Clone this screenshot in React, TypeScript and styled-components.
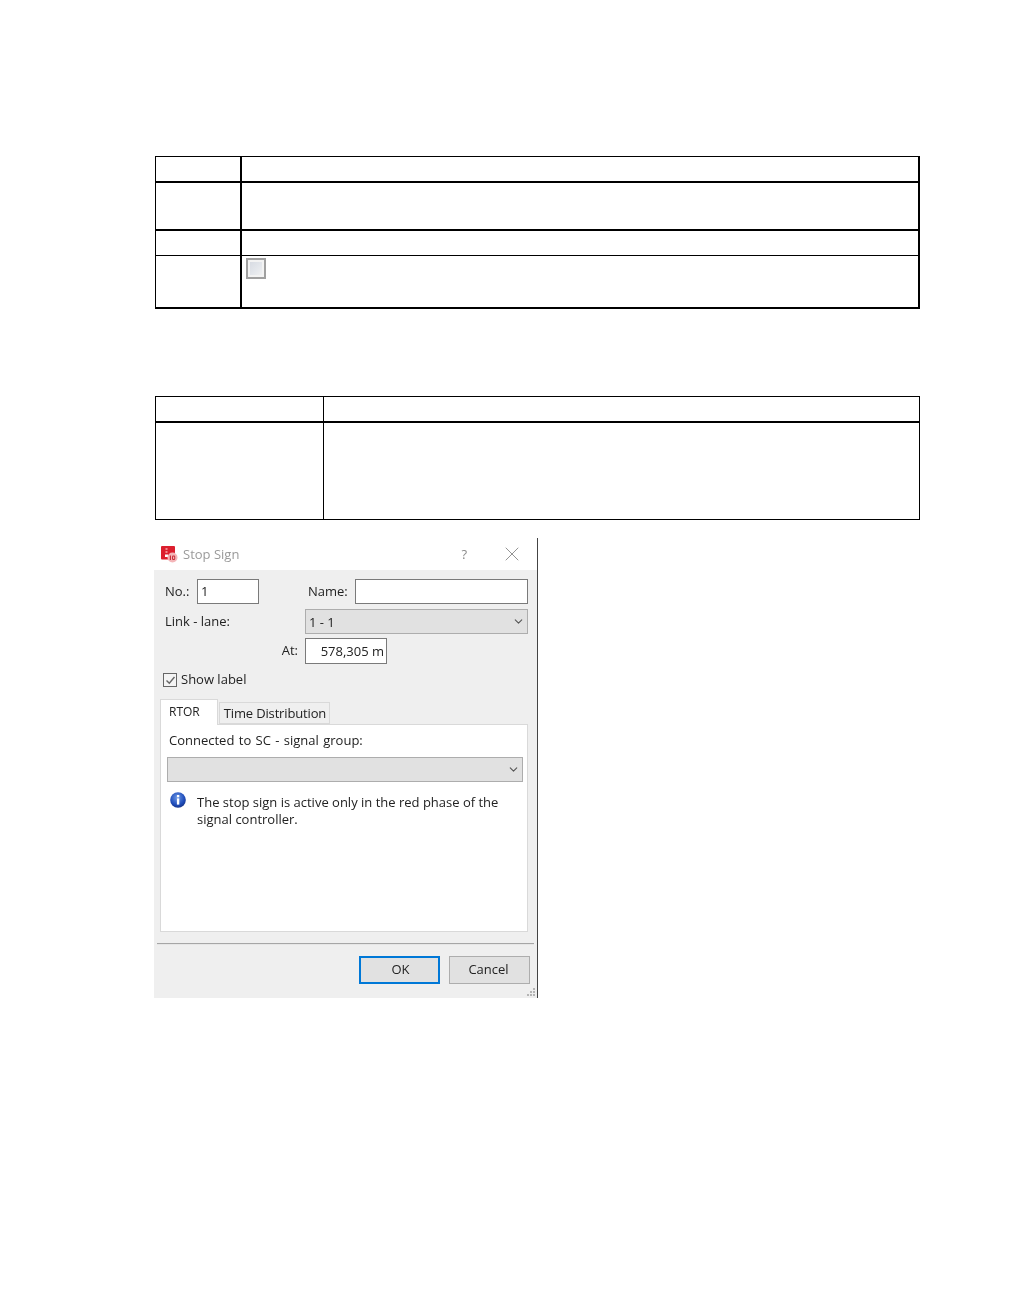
import React from 'react';
import styled, { createGlobalStyle } from 'styled-components';
import { ChevronDown, X } from 'lucide-react';

const GlobalStyle = createGlobalStyle`
  html, body {
    margin: 0;
    padding: 0;
    background: #fff;
  }
  * {
    box-sizing: border-box;
  }
`;

const Page = styled.div`
  width: 1020px;
  height: 1299px;
  padding: 156px 0 0 155px;
  font-family: "Open Sans", "Noto Sans", sans-serif;
  font-size: 13px;
  color: #222;
  overflow: hidden;
`;

const DocTable = styled.div<{ $top?: number; $rightWidth: number }>`
  width: 765px;
  margin-top: ${(p) => p.$top ?? 0}px;
  border-top: 1px solid #000;
  border-left: 1px solid #000;
  border-right: ${(p) => p.$rightWidth}px solid #000;
`;

const DocRow = styled.div<{ $height: number; $line: number; $column: number; $rule: number }>`
  display: grid;
  grid-template-columns: ${(p) => p.$column}px 1fr;
  height: ${(p) => p.$height}px;
  border-bottom: ${(p) => p.$line}px solid #000;

  & > div:first-child {
    border-right: ${(p) => p.$rule}px solid #000;
  }
`;

const DocCell = styled.div`
  padding: 2px 4px;
`;

const EmptyCheck = styled.div`
  width: 20px;
  height: 21px;
  border: 2px solid #a0a0a0;
  background: linear-gradient(135deg, #d4d8e0 0%, #e4e7ec 55%, #f4f4f4 100%);
  box-shadow: inset 0 0 0 2px #f3f3f3;
`;

const Dialog = styled.div`
  width: 384px;
  height: 460px;
  margin: 18px 0 0 -1px;
  border-right: 1px solid #444;
  filter: blur(0.25px);
`;

const TitleBar = styled.div`
  display: flex;
  align-items: center;
  height: 32px;
  padding: 0 13px 0 7px;
  background: #fff;
  color: #9a9a9a;
`;

const TitleText = styled.span`
  margin-left: 5px;
  flex: 1;
`;

const HelpMark = styled.span`
  margin-right: 33px;
  color: #8a8a8a;
`;

const DialogBody = styled.div`
  height: 428px;
  padding-top: 9px;
  background: #efefef;
`;

const FormRow = styled.div<{ $top?: number; $left?: number; $height?: number }>`
  display: flex;
  align-items: center;
  height: ${(p) => (p.$height ? `${p.$height}px` : 'auto')};
  margin-top: ${(p) => p.$top ?? 0}px;
  padding-left: ${(p) => p.$left ?? 11}px;
`;

const Label = styled.span<{ $width: number; $gap?: number; $right?: number }>`
  flex: none;
  width: ${(p) => p.$width}px;
  margin-left: ${(p) => p.$gap ?? 0}px;
  margin-top: -2px;
  padding-right: ${(p) => p.$right ?? 0}px;
  text-align: ${(p) => (p.$right ? 'right' : 'left')};
`;

const TextField = styled.div<{ $width: number; $height?: number; $align?: string }>`
  width: ${(p) => p.$width}px;
  height: ${(p) => p.$height ?? 25}px;
  padding: 0 2px 0 3px;
  border: 1px solid #7a7a7a;
  background: #fff;
  line-height: ${(p) => (p.$height ?? 25) - 2}px;
  text-align: ${(p) => p.$align ?? 'left'};
  white-space: nowrap;
`;

const SelectBox = styled.div<{ $width: number; $top?: number }>`
  display: flex;
  align-items: center;
  justify-content: space-between;
  width: ${(p) => p.$width}px;
  height: 25px;
  margin-top: ${(p) => p.$top ?? 0}px;
  padding: 0 2px 0 3px;
  border: 1px solid #adadad;
  background: #e1e1e1;
`;

const CheckBox = styled.span`
  display: flex;
  align-items: center;
  justify-content: center;
  flex: none;
  width: 14px;
  height: 14px;
  margin-right: 4px;
  border: 1.5px solid #666;
  background: #f4f4f4;
`;

const CheckText = styled.span`
  margin-top: -2px;
`;

const TabStrip = styled.div`
  display: flex;
  align-items: flex-end;
  height: 25px;
  margin: 12px 0 0 6px;
`;

const Tab = styled.div<{ $active?: boolean }>`
  height: ${(p) => (p.$active ? 26 : 22)}px;
  margin-bottom: ${(p) => (p.$active ? -1 : 0)}px;
  margin-right: ${(p) => (p.$active ? 1 : 0)}px;
  padding: ${(p) => (p.$active ? '3px 17px 0 8px' : '1px 3px 0 4px')};
  border: 1px solid #d9d9d9;
  border-bottom: ${(p) => (p.$active ? 'none' : '1px solid #d9d9d9')};
  background: ${(p) => (p.$active ? '#fff' : '#efefef')};
  font-size: ${(p) => (p.$active ? 12 : 13)}px;
  letter-spacing: ${(p) => (p.$active ? 0 : -0.15)}px;
  position: relative;
  z-index: ${(p) => (p.$active ? 1 : 0)};
`;

const TabPanel = styled.div`
  width: 368px;
  height: 208px;
  margin-left: 6px;
  padding: 6px 6px 0;
  border: 1px solid #d9d9d9;
  background: #fff;
`;

const PanelLabel = styled.div`
  padding-left: 2px;
  word-spacing: 1px;
`;

const InfoRow = styled.div`
  display: flex;
  gap: 11px;
  margin: 10px 0 0 3px;
  line-height: 17px;
`;

const InfoIcon = styled.svg`
  flex: none;
`;

const InfoText = styled.div`
  margin-top: 2px;
`;

const Separator = styled.div`
  width: 377px;
  height: 2px;
  margin: 11px 0 0 3px;
  background: linear-gradient(#a6a6a6 50%, #e6e6e6 50%);
`;

const ButtonRow = styled.div`
  display: flex;
  gap: 9px;
  margin: 11px 0 0 205px;
`;

const DialogButton = styled.div<{ $primary?: boolean }>`
  display: flex;
  align-items: center;
  justify-content: center;
  width: 81px;
  height: 28px;
  padding: ${(p) => (p.$primary ? '0 0 2px 2px' : '0 2px 2px 0')};
  border: ${(p) => (p.$primary ? '2px solid #0078d7' : '1px solid #adadad')};
  background: #e1e1e1;
`;

const GripRow = styled.div`
  display: flex;
  justify-content: flex-end;
  padding: 4px 1px 0 0;
`;

const AppIcon = () => (
  <svg width="17" height="17" viewBox="0 0 17 17">
    <rect x="0" y="0" width="14" height="13.5" rx="1" fill="#dc1f2e" />
    <rect x="4.5" y="2" width="2" height="2" fill="#f08a90" />
    <rect x="4.5" y="5" width="2" height="2" fill="#f08a90" />
    <rect x="4" y="8.5" width="3" height="2.5" fill="#fff" />
    <circle cx="11.5" cy="11.5" r="5" fill="#f4b5b8" />
    <rect x="8.8" y="9.5" width="1.2" height="4.5" fill="#c9303b" />
    <rect x="11" y="9.5" width="3.2" height="4.5" rx="1.2" fill="#c9303b" />
    <rect x="12" y="10.6" width="1.2" height="2.3" fill="#f4b5b8" />
  </svg>
);

const Info = () => (
  <InfoIcon width="16" height="16" viewBox="0 0 16 16">
    <defs>
      <radialGradient id="infoFill" cx="45%" cy="35%" r="70%">
        <stop offset="0%" stopColor="#6f9ae6" />
        <stop offset="65%" stopColor="#1f4dbb" />
        <stop offset="100%" stopColor="#142f80" />
      </radialGradient>
    </defs>
    <circle cx="8" cy="8" r="7.8" fill="url(#infoFill)" />
    <rect x="6.9" y="3" width="2.4" height="2.3" fill="#fff" />
    <rect x="6.9" y="6.4" width="2.4" height="6.2" fill="#fff" />
  </InfoIcon>
);

const Grip = () => (
  <svg width="9" height="9" viewBox="0 0 9 9" fill="#b5b5b5">
    <rect x="6" y="0" width="2" height="2" />
    <rect x="3" y="3" width="2" height="2" />
    <rect x="6" y="3" width="2" height="2" />
    <rect x="0" y="6" width="2" height="2" />
    <rect x="3" y="6" width="2" height="2" />
    <rect x="6" y="6" width="2" height="2" />
  </svg>
);

export default function App() {
  return (
    <Page>
      <GlobalStyle />

      <DocTable $rightWidth={2}>
        <DocRow $height={26} $line={2} $column={86} $rule={2}>
          <DocCell />
          <DocCell />
        </DocRow>
        <DocRow $height={48} $line={2} $column={86} $rule={2}>
          <DocCell />
          <DocCell />
        </DocRow>
        <DocRow $height={25} $line={1} $column={86} $rule={2}>
          <DocCell />
          <DocCell />
        </DocRow>
        <DocRow $height={53} $line={2} $column={86} $rule={2}>
          <DocCell />
          <DocCell>
            <EmptyCheck />
          </DocCell>
        </DocRow>
      </DocTable>

      <DocTable $top={87} $rightWidth={1}>
        <DocRow $height={26} $line={2} $column={168} $rule={1}>
          <DocCell />
          <DocCell />
        </DocRow>
        <DocRow $height={97} $line={1} $column={168} $rule={1}>
          <DocCell />
          <DocCell />
        </DocRow>
      </DocTable>

      <Dialog>
        <TitleBar>
          <AppIcon />
          <TitleText>Stop Sign</TitleText>
          <HelpMark>?</HelpMark>
          <X size={24} strokeWidth={0.8} color="#777" />
        </TitleBar>

        <DialogBody>
          <FormRow>
            <Label $width={32}>No.:</Label>
            <TextField $width={62}>1</TextField>
            <Label $width={47} $gap={49}>Name:</Label>
            <TextField $width={173} />
          </FormRow>

          <FormRow $top={5}>
            <Label $width={140}>Link - lane:</Label>
            <SelectBox $width={223}>
              1 - 1
              <ChevronDown size={13} color="#555" />
            </SelectBox>
          </FormRow>

          <FormRow $top={4}>
            <Label $width={140} $right={7}>At:</Label>
            <TextField $width={82} $height={26} $align="right">578,305 m</TextField>
          </FormRow>

          <FormRow $top={9} $left={9} $height={14}>
            <CheckBox>
              <svg width="11" height="11" viewBox="0 0 11 11" fill="none" stroke="#666" strokeWidth="1.4">
                <path d="M1.5 5.5 L4.3 8.3 L9.5 2" />
              </svg>
            </CheckBox>
            <CheckText>Show label</CheckText>
          </FormRow>

          <TabStrip>
            <Tab $active>RTOR</Tab>
            <Tab>Time Distribution</Tab>
          </TabStrip>

          <TabPanel>
            <PanelLabel>Connected to SC - signal group:</PanelLabel>
            <SelectBox $width={356} $top={8}>
              <span />
              <ChevronDown size={13} color="#555" />
            </SelectBox>
            <InfoRow>
              <Info />
              <InfoText>
                The stop sign is active only in the red phase of the
                <br />
                signal controller.
              </InfoText>
            </InfoRow>
          </TabPanel>

          <Separator />

          <ButtonRow>
            <DialogButton $primary>OK</DialogButton>
            <DialogButton>Cancel</DialogButton>
          </ButtonRow>

          <GripRow>
            <Grip />
          </GripRow>
        </DialogBody>
      </Dialog>
    </Page>
  );
}
